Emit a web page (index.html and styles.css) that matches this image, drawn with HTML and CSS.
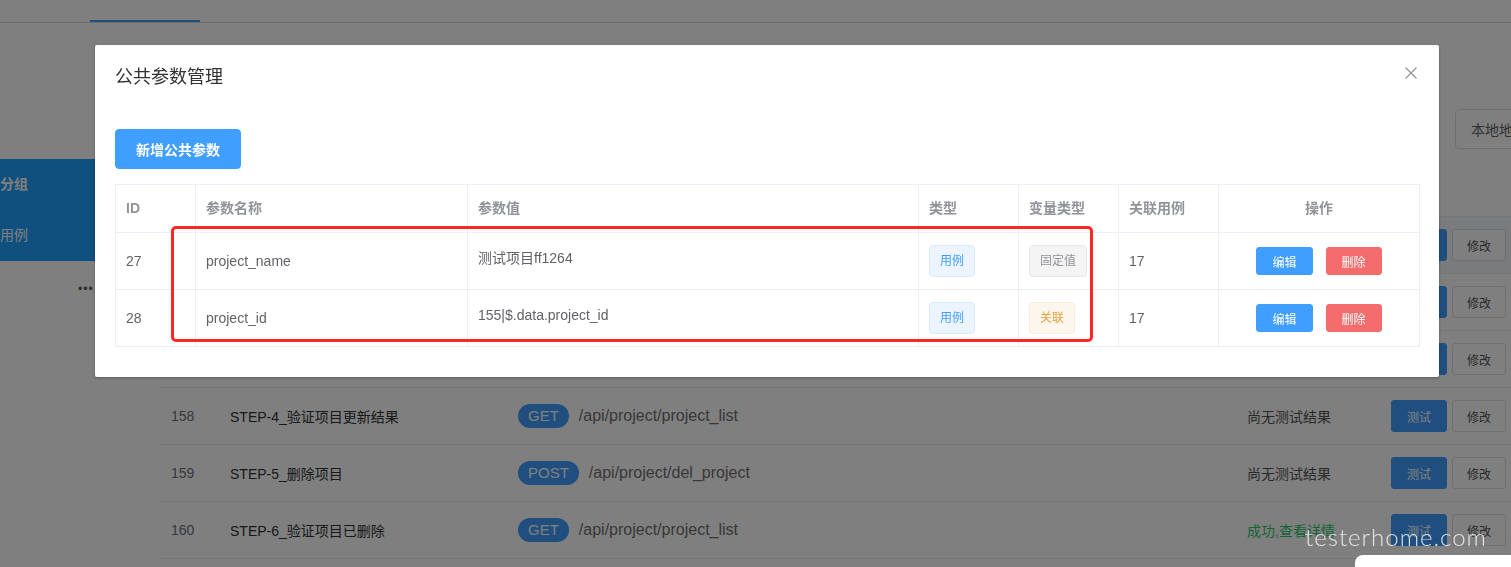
FILE: index.html
```html
<!DOCTYPE html>
<html lang="zh-CN">
<head>
    <meta charset="UTF-8">
    <meta name="viewport" content="width=device-width, initial-scale=1.0">
    <title>公共参数管理</title>
    <link rel="stylesheet" href="styles.css">
</head>
<body>
    <div class="page">
        <div class="topbar">
            <div class="tab active"></div>
        </div>

        <div class="main">
            <aside class="sidebar">
                <div class="menu">
                    <div class="menu-item strong">分组</div>
                    <div class="menu-item">用例</div>
                </div>
                <div class="more">•••</div>
            </aside>

            <section class="content">
                <div class="toolbar">
                    <button class="btn-plain">本地地址</button>
                </div>

                <div class="case-table">
                    <div class="case-row case-head">
                        <div>ID</div><div>名称</div><div>接口</div><div>结果</div><div></div>
                    </div>
                    <div class="case-row hover">
                        <div class="case-id">155</div>
                        <div class="case-name">STEP-1_新增项目</div>
                        <div class="case-api"><span class="method">POST</span><span class="path">/api/project/add_project</span></div>
                        <div class="case-status">尚无测试结果</div>
                        <div class="case-actions"><button class="btn-run">测试</button><button class="btn-edit">修改</button></div>
                    </div>
                    <div class="case-row">
                        <div class="case-id">156</div>
                        <div class="case-name">STEP-2_验证项目新增结果</div>
                        <div class="case-api"><span class="method">GET</span><span class="path">/api/project/project_list</span></div>
                        <div class="case-status">尚无测试结果</div>
                        <div class="case-actions"><button class="btn-run">测试</button><button class="btn-edit">修改</button></div>
                    </div>
                    <div class="case-row">
                        <div class="case-id">157</div>
                        <div class="case-name">STEP-3_更新项目</div>
                        <div class="case-api"><span class="method">POST</span><span class="path">/api/project/update_project</span></div>
                        <div class="case-status">尚无测试结果</div>
                        <div class="case-actions"><button class="btn-run">测试</button><button class="btn-edit">修改</button></div>
                    </div>
                    <div class="case-row">
                        <div class="case-id">158</div>
                        <div class="case-name">STEP-4_验证项目更新结果</div>
                        <div class="case-api"><span class="method">GET</span><span class="path">/api/project/project_list</span></div>
                        <div class="case-status">尚无测试结果</div>
                        <div class="case-actions"><button class="btn-run">测试</button><button class="btn-edit">修改</button></div>
                    </div>
                    <div class="case-row">
                        <div class="case-id">159</div>
                        <div class="case-name">STEP-5_删除项目</div>
                        <div class="case-api"><span class="method">POST</span><span class="path">/api/project/del_project</span></div>
                        <div class="case-status">尚无测试结果</div>
                        <div class="case-actions"><button class="btn-run">测试</button><button class="btn-edit">修改</button></div>
                    </div>
                    <div class="case-row">
                        <div class="case-id">160</div>
                        <div class="case-name">STEP-6_验证项目已删除</div>
                        <div class="case-api"><span class="method">GET</span><span class="path">/api/project/project_list</span></div>
                        <div class="case-status success">成功,查看详情</div>
                        <div class="case-actions"><button class="btn-run">测试</button><button class="btn-edit">修改</button></div>
                    </div>
                </div>
            </section>
        </div>
    </div>

    <div class="mask"></div>

    <div class="dialog-wrap">
        <div class="dialog">
            <div class="dialog-header">
                <span class="dialog-title">公共参数管理</span>
                <button class="dialog-close" aria-label="关闭">
                    <svg width="16" height="16" viewBox="0 0 16 16">
                        <path d="M2.5 2.5 L13.5 13.5 M13.5 2.5 L2.5 13.5" stroke="#909399" stroke-width="1.2" fill="none"/>
                    </svg>
                </button>
            </div>
            <div class="dialog-body">
                <button class="btn-primary">新增公共参数</button>

                <table class="param-table">
                    <colgroup>
                        <col style="width: 80px">
                        <col style="width: 272px">
                        <col style="width: 451px">
                        <col style="width: 100px">
                        <col style="width: 100px">
                        <col style="width: 100px">
                        <col style="width: 201px">
                    </colgroup>
                    <thead>
                        <tr>
                            <th><div class="cell">ID</div></th>
                            <th><div class="cell">参数名称</div></th>
                            <th><div class="cell">参数值</div></th>
                            <th><div class="cell">类型</div></th>
                            <th><div class="cell">变量类型</div></th>
                            <th><div class="cell">关联用例</div></th>
                            <th class="center"><div class="cell">操作</div></th>
                        </tr>
                    </thead>
                    <tbody>
                        <tr>
                            <td><div class="cell">27</div></td>
                            <td><div class="cell">project_name</div></td>
                            <td><div class="cell param-value">测试项目ff1264</div></td>
                            <td><div class="cell"><span class="tag tag-primary">用例</span></div></td>
                            <td><div class="cell"><span class="tag tag-info">固定值</span></div></td>
                            <td><div class="cell">17</div></td>
                            <td><div class="cell ops"><button class="btn-mini btn-blue">编辑</button><button class="btn-mini btn-red">删除</button></div></td>
                        </tr>
                        <tr>
                            <td><div class="cell">28</div></td>
                            <td><div class="cell">project_id</div></td>
                            <td><div class="cell param-value">155|$.data.project_id</div></td>
                            <td><div class="cell"><span class="tag tag-primary">用例</span></div></td>
                            <td><div class="cell"><span class="tag tag-warning">关联</span></div></td>
                            <td><div class="cell">17</div></td>
                            <td><div class="cell ops"><button class="btn-mini btn-blue">编辑</button><button class="btn-mini btn-red">删除</button></div></td>
                        </tr>
                    </tbody>
                </table>
            </div>

            <!-- 截图上的红框标注 -->
            <div class="mark-box"></div>
        </div>
    </div>

    <div class="watermark">testerhome.com</div>
    <div class="corner-card"></div>
</body>
</html>
```

FILE: styles.css
```css
body {
    margin: 0;
    width: 1511px;
    height: 567px;
    overflow: hidden;
    font-family: "Liberation Sans", "Noto Sans CJK SC", sans-serif;
    background-color: #fff;
}
button {
    font-family: inherit;
    cursor: pointer;
}

/* 背景页面 */
.topbar {
    height: 22px;
    border-bottom: 1px solid #dcdcdc;
}
.tab {
    width: 110px;
    height: 22px;
    margin-left: 90px;
    box-sizing: border-box;
}
.tab.active {
    border-bottom: 2px solid #409eff;
}
.main {
    display: flex;
}
.sidebar {
    width: 150px;
    flex-shrink: 0;
}
.menu {
    margin-top: 136px;
    background-color: #20a0ff;
}
.menu-item {
    height: 51px;
    line-height: 51px;
    font-size: 14px;
    color: #fff;
}
.menu-item.strong {
    font-weight: bold;
}
.more {
    margin-top: 18px;
    padding-left: 78px;
    font-size: 12px;
    line-height: 20px;
    color: #555;
    letter-spacing: 1px;
}
.content {
    width: 1383px;
    flex-shrink: 0;
    padding-left: 10px;
}
.toolbar {
    display: flex;
    justify-content: flex-end;
    margin-top: 86px;
}
.btn-plain {
    height: 40px;
    padding: 0 15px;
    font-size: 14px;
    color: #606266;
    background-color: #fff;
    border: 1px solid #dcdfe6;
    border-radius: 4px;
}
.case-table {
    width: 1393px;
    margin-top: 11px;
}
.case-row {
    display: grid;
    grid-template-columns: 59px 288px 729px 144px auto;
    align-items: center;
    height: 56px;
    padding-left: 11px;
    border-bottom: 1px solid #ebeef5;
    font-size: 14px;
}
.case-head {
    color: #909399;
    font-weight: bold;
}
.case-row.hover {
    background-color: #f5f7fa;
}
.case-id {
    color: #6b7280;
}
.case-name {
    color: #303133;
}
.case-api {
    display: flex;
    align-items: center;
    gap: 10px;
}
.method {
    height: 24px;
    line-height: 24px;
    padding: 0 10px;
    font-size: 15px;
    color: #fff;
    background-color: #409eff;
    border-radius: 12px;
}
.path {
    font-size: 16px;
    color: #707070;
}
.case-status {
    color: #555;
}
.case-status.success {
    color: #27c865;
}
.case-actions {
    display: flex;
    gap: 5px;
}
.btn-run {
    height: 32px;
    padding: 0 15px;
    font-size: 12px;
    color: #fff;
    background-color: #409eff;
    border: 1px solid #409eff;
    border-radius: 3px;
}
.btn-edit {
    height: 32px;
    padding: 0 14px;
    font-size: 12px;
    color: #555;
    background-color: #fff;
    border: 1px solid #dcdfe6;
    border-radius: 3px;
}

/* 遮罩与弹窗 */
.mask {
    position: fixed;
    inset: 0;
    background-color: rgba(0, 0, 0, 0.5);
}
.dialog-wrap {
    position: fixed;
    inset: 0;
}
.dialog {
    position: relative;
    width: 1344px;
    margin: 45px 0 0 95px;
    background-color: #fff;
    border-radius: 2px;
    box-shadow: 0 1px 3px rgba(0, 0, 0, 0.3);
}
.dialog-header {
    padding: 20px 20px 10px;
}
.dialog-title {
    display: block;
    font-size: 18px;
    line-height: 24px;
    color: #303133;
}
.dialog-close {
    position: absolute;
    top: 20px;
    right: 20px;
    width: 16px;
    height: 16px;
    padding: 0;
    border: none;
    background: none;
}
.dialog-close svg {
    display: block;
}
.dialog-body {
    padding: 30px 20px;
}
.btn-primary {
    height: 40px;
    padding: 0 20px;
    font-size: 14px;
    font-weight: bold;
    color: #fff;
    background-color: #409eff;
    border: 1px solid #409eff;
    border-radius: 4px;
}
.param-table {
    width: 100%;
    margin-top: 15px;
    table-layout: fixed;
    border-collapse: collapse;
    border: 1px solid #ebeef5;
    font-size: 14px;
    color: #606266;
}
.param-table th,
.param-table td {
    padding: 12px 0;
    text-align: left;
    vertical-align: middle;
    border: 1px solid #ebeef5;
}
.param-table th {
    color: #909399;
    font-weight: bold;
}
.param-table th.center {
    text-align: center;
}
.cell {
    padding: 0 10px;
    line-height: 23px;
}
.param-value {
    padding-bottom: 6px;
}
.tag {
    display: inline-block;
    height: 32px;
    line-height: 30px;
    padding: 0 10px;
    box-sizing: border-box;
    font-size: 12px;
    border: 1px solid;
    border-radius: 4px;
    vertical-align: middle;
}
.tag-primary {
    color: #409eff;
    background-color: #ecf5ff;
    border-color: #d9ecff;
}
.tag-info {
    color: #909399;
    background-color: #f4f4f5;
    border-color: #e9e9eb;
}
.tag-warning {
    color: #e6a23c;
    background-color: #fdf6ec;
    border-color: #faecd8;
}
.ops {
    display: flex;
    justify-content: center;
    gap: 13px;
}
.btn-mini {
    height: 28px;
    padding: 0 15px;
    font-size: 12px;
    color: #fff;
    border: 1px solid;
    border-radius: 3px;
}
.btn-blue {
    background-color: #409eff;
    border-color: #409eff;
}
.btn-red {
    background-color: #f56c6c;
    border-color: #f56c6c;
}
.mark-box {
    position: absolute;
    left: 76px;
    top: 181px;
    width: 922px;
    height: 116px;
    box-sizing: border-box;
    border: 3px solid #ff2727;
    border-radius: 5px;
}

/* 水印 */
.watermark {
    position: fixed;
    left: 1305px;
    top: 522px;
    font-family: Lato, "Liberation Sans", sans-serif;
    font-weight: 300;
    font-size: 24px;
    letter-spacing: 1px;
    color: rgba(255, 255, 255, 0.8);
}
.corner-card {
    position: fixed;
    left: 1355px;
    top: 555px;
    width: 170px;
    height: 30px;
    background-color: #fff;
    border-radius: 8px 0 0 0;
}
```
